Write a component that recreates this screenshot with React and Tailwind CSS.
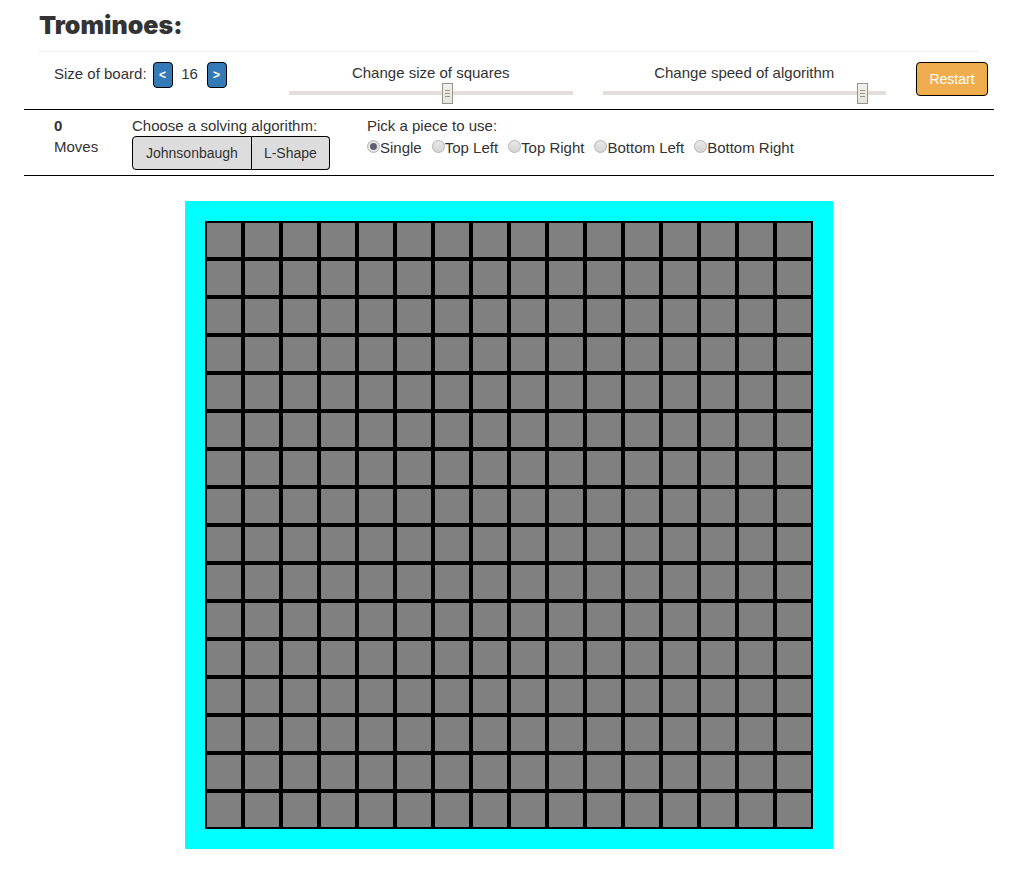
import { useState } from "react";

const PIECES = ["Single", "Top Left", "Top Right", "Bottom Left", "Bottom Right"];

const sliderClass =
  "block h-[18px] w-full cursor-pointer appearance-none bg-transparent " +
  "[&::-webkit-slider-runnable-track]:h-1 [&::-webkit-slider-runnable-track]:bg-[#e3deda] " +
  "[&::-webkit-slider-thumb]:-mt-2 [&::-webkit-slider-thumb]:h-[21px] [&::-webkit-slider-thumb]:w-[11px] " +
  "[&::-webkit-slider-thumb]:appearance-none [&::-webkit-slider-thumb]:border " +
  "[&::-webkit-slider-thumb]:border-[#98948c] [&::-webkit-slider-thumb]:bg-[#eeebe6] " +
  "[&::-webkit-slider-thumb]:bg-[linear-gradient(#98948c,#98948c),linear-gradient(#98948c,#98948c),linear-gradient(#98948c,#98948c),linear-gradient(#f2f1f0,#e8e3da)] " +
  "[&::-webkit-slider-thumb]:bg-[position:2px_6px,2px_9px,2px_12px,0_0] " +
  "[&::-webkit-slider-thumb]:bg-[size:5px_1px,5px_1px,5px_1px,100%_100%] " +
  "[&::-webkit-slider-thumb]:bg-no-repeat";

function Slider({ label, id, value, onChange }) {
  return (
    <div className="min-w-0 flex-1">
      <label htmlFor={id} className="block text-center leading-[22px]">
        {label}
      </label>
      <input
        id={id}
        type="range"
        min="0"
        max="1000"
        value={value}
        onChange={(e) => onChange(Number(e.target.value))}
        className={sliderClass}
      />
    </div>
  );
}

function StepButton({ children, label, onClick }) {
  return (
    <button
      type="button"
      aria-label={label}
      onClick={onClick}
      className="h-[26px] w-5 rounded border border-black bg-[#337ab7] text-center text-[12px] leading-[18px] font-bold text-white"
    >
      {children}
    </button>
  );
}

export default function App() {
  const [size, setSize] = useState(16);
  const [squares, setSquares] = useState(563);
  const [speed, setSpeed] = useState(934);
  const [piece, setPiece] = useState("Single");

  const restart = () => {
    setSize(16);
    setPiece("Single");
  };

  return (
    <main className="bg-white pr-[22px] pb-6 pl-6 font-['Liberation_Sans',Arial,sans-serif] text-[15px] text-[#333333]">
      <header className="mx-[15px] border-b border-[#eeeeee] pt-3 pb-3">
        <h1 className="font-['Arial_Black','Inter',sans-serif] text-[25px] leading-[27px] font-black">
          Trominoes:
        </h1>
      </header>

      <section className="flex h-[58px] items-start border-b border-black pt-2.5 pr-1.5 pl-[30px]">
        <div className="flex w-[235px] items-start">
          <span className="leading-6">Size of board:</span>
          <div className="ml-1.5 flex items-start">
            <StepButton label="Smaller board" onClick={() => setSize(Math.max(2, size / 2))}>
              &lt;
            </StepButton>
            <span className="w-[34px] text-center leading-6">{size}</span>
            <StepButton label="Larger board" onClick={() => setSize(Math.min(16, size * 2))}>
              &gt;
            </StepButton>
          </div>
        </div>
        <div className="flex min-w-0 flex-1 gap-[30px]">
          <Slider id="squares" label="Change size of squares" value={squares} onChange={setSquares} />
          <Slider id="speed" label="Change speed of algorithm" value={speed} onChange={setSpeed} />
        </div>
        <button
          type="button"
          onClick={restart}
          className="ml-[30px] h-[34px] w-[72px] rounded border border-black bg-[#f0ad4e] text-[14px] text-white"
        >
          Restart
        </button>
      </section>

      <section className="flex h-[66px] items-start border-b border-black pt-[5px] pl-[30px] leading-[21px]">
        <div className="w-[78px]">
          <strong className="block">0</strong>
          <span className="block">Moves</span>
        </div>
        <div className="w-[235px]">
          <p>Choose a solving algorithm:</p>
          <div className="flex">
            <button
              type="button"
              className="h-[34px] rounded-l border border-black bg-[#dddddd] px-[13px] text-[14px]"
            >
              Johnsonbaugh
            </button>
            <button
              type="button"
              className="h-[34px] rounded-r border border-l-0 border-black bg-[#dddddd] px-3 text-[14px]"
            >
              L-Shape
            </button>
          </div>
        </div>
        <fieldset>
          <legend>Pick a piece to use:</legend>
          <div className="flex gap-2.5">
            {PIECES.map((name) => (
              <label key={name} className="flex">
                <input
                  type="radio"
                  name="piece"
                  checked={piece === name}
                  onChange={() => setPiece(name)}
                  className="mt-1 size-[13px] appearance-none rounded-full border border-[#b3b3b3] bg-linear-to-b from-[#e8e8e8] to-[#d6d6d6] checked:bg-[radial-gradient(circle,#606070_0_2px,#606070_3px,#e4e4e4_4px)]"
                />
                <span className="pt-px">{name}</span>
              </label>
            ))}
          </div>
        </fieldset>
      </section>

      <div className="mt-[25px] flex justify-center">
        <div className="bg-[#00ffff] p-5">
          <div className="grid" style={{ gridTemplateColumns: `repeat(${size}, 38px)` }}>
            {Array.from({ length: size * size }, (_, i) => (
              <div key={i} className="h-[38px] border-2 border-black bg-[#808080]" />
            ))}
          </div>
        </div>
      </div>
    </main>
  );
}
